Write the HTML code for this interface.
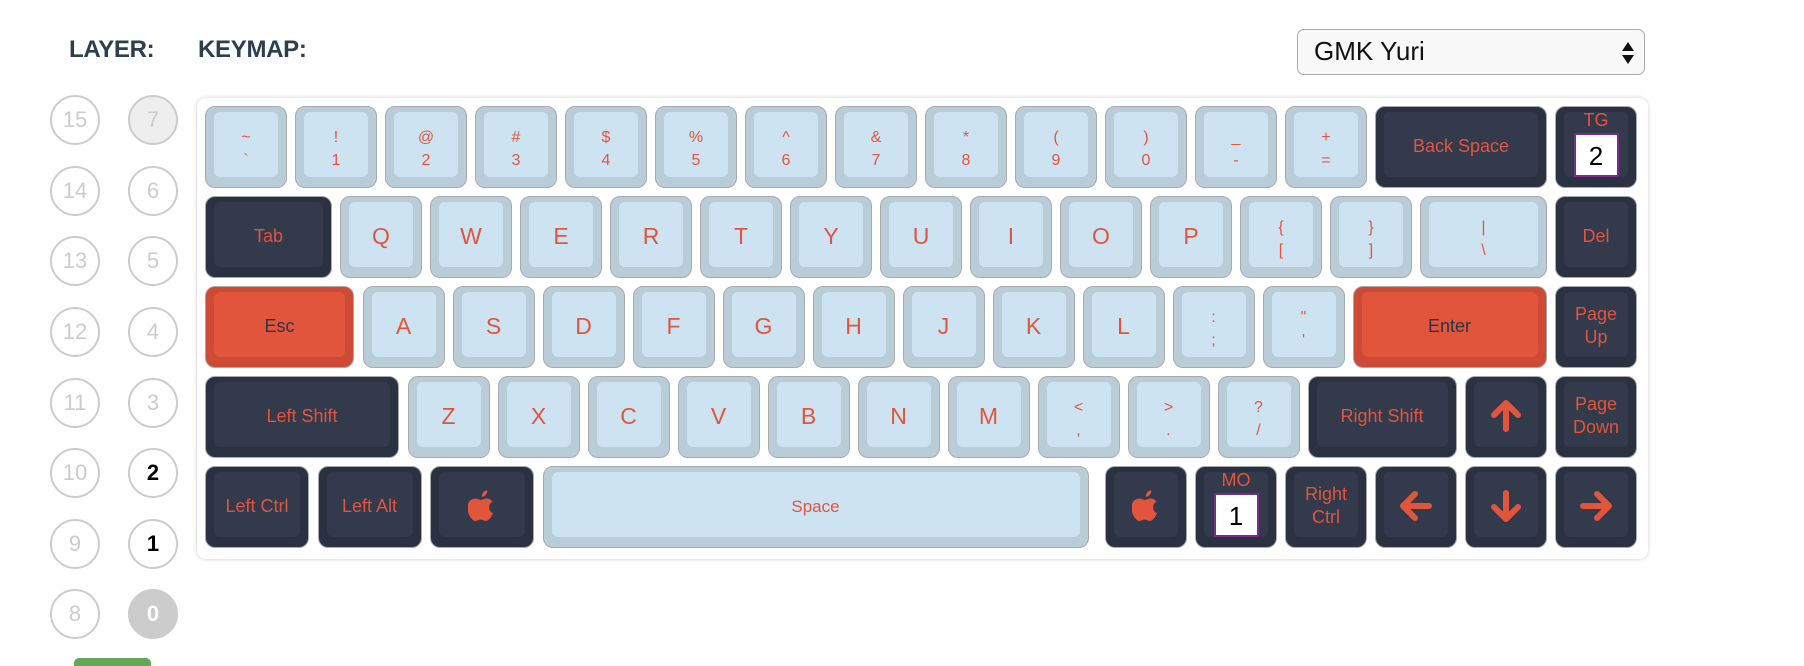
<!DOCTYPE html>
<html><head><meta charset="utf-8"><style>
html,body{margin:0;padding:0;width:1804px;height:666px;background:#fff;overflow:hidden;font-family:"Liberation Sans",sans-serif;position:relative}
.h{position:absolute;top:36px;font-size:24px;font-weight:bold;color:#2c3e50;letter-spacing:-0.3px}
.sel{position:absolute;left:1297px;top:29px;width:348px;height:46px;box-sizing:border-box;border:1.5px solid #aaa;border-radius:7px;background:#f8f8f8;font-size:26px;color:#111;line-height:43px;padding-left:16px}
.sel svg{position:absolute;right:10px;top:12px}
.c{position:absolute;width:50px;height:50px;box-sizing:border-box;border:2px solid #ccc;border-radius:50%;color:#ccc;font-size:22px;text-align:center;line-height:46px}
.panel{position:absolute;left:197px;top:98px;width:1451px;height:461px;background:#fff;border-radius:9px;box-shadow:0 0 4px rgba(0,0,0,.2)}
.k{position:absolute;height:82px;box-sizing:border-box;border:1.5px solid #aaa;border-radius:10px;background:#b9cdd9}
.k::before{content:"";position:absolute;left:8px;right:8px;top:5px;bottom:10px;background:#cee3f1;border-radius:6px}
.k.d{background:#2a3241}.k.d::before{background:#323a4b}
.k.r{background:#cd4b36}.k.r::before{background:#e2553d}
.k span{position:absolute;left:0;right:0;top:0;bottom:2px;display:flex;flex-direction:column;align-items:center;justify-content:center;color:#e2553d;font-size:16px;line-height:23px;text-align:center}
.k span.t{bottom:-4px}
.k span.a{font-size:23px}
.k span.m{font-size:18px}
.k.r span{color:#2c3545}
.box{width:45px;height:44px;background:#fff;border:2px solid #7b2a85;color:#000;font-size:26px;line-height:42px;box-sizing:border-box;margin-top:1px}
</style></head><body>
<div class="h" style="left:69px">LAYER:</div>
<div class="h" style="left:198px">KEYMAP:</div>
<div class="sel">GMK Yuri<svg width="12" height="22" viewBox="0 0 12 22"><path d="M6 0L12 9H0Z M6 22L12 13H0Z" fill="#111"/></svg></div>

<div class="c" style="left:50px;top:95px">15</div><div class="c" style="left:128px;top:95px;background:#eee">7</div>
<div class="c" style="left:50px;top:166px">14</div><div class="c" style="left:128px;top:166px">6</div>
<div class="c" style="left:50px;top:236px">13</div><div class="c" style="left:128px;top:236px">5</div>
<div class="c" style="left:50px;top:307px">12</div><div class="c" style="left:128px;top:307px">4</div>
<div class="c" style="left:50px;top:378px">11</div><div class="c" style="left:128px;top:378px">3</div>
<div class="c" style="left:50px;top:448px">10</div><div class="c" style="left:128px;top:448px;color:#000;font-weight:bold">2</div>
<div class="c" style="left:50px;top:519px">9</div><div class="c" style="left:128px;top:519px;color:#000;font-weight:bold">1</div>
<div class="c" style="left:50px;top:589px">8</div><div class="c" style="left:128px;top:589px;background:#ccc;color:#fff;font-weight:bold">0</div>
<div style="position:absolute;left:74px;top:658px;width:77px;height:20px;background:#62a857;border-radius:5px"></div>

<div class="panel"></div>
<!-- row1 -->
<div class="k" style="left:205px;top:106px;width:82px"><span class="t">~<br>`</span></div>
<div class="k" style="left:295px;top:106px;width:82px"><span class="t">!<br>1</span></div>
<div class="k" style="left:385px;top:106px;width:82px"><span class="t">@<br>2</span></div>
<div class="k" style="left:475px;top:106px;width:82px"><span class="t">#<br>3</span></div>
<div class="k" style="left:565px;top:106px;width:82px"><span class="t">$<br>4</span></div>
<div class="k" style="left:655px;top:106px;width:82px"><span class="t">%<br>5</span></div>
<div class="k" style="left:745px;top:106px;width:82px"><span class="t">^<br>6</span></div>
<div class="k" style="left:835px;top:106px;width:82px"><span class="t">&amp;<br>7</span></div>
<div class="k" style="left:925px;top:106px;width:82px"><span class="t">*<br>8</span></div>
<div class="k" style="left:1015px;top:106px;width:82px"><span class="t">(<br>9</span></div>
<div class="k" style="left:1105px;top:106px;width:82px"><span class="t">)<br>0</span></div>
<div class="k" style="left:1195px;top:106px;width:82px"><span class="t">_<br>-</span></div>
<div class="k" style="left:1285px;top:106px;width:82px"><span class="t">+<br>=</span></div>
<div class="k d" style="left:1375px;top:106px;width:172px"><span class="m">Back Space</span></div>
<div class="k d" style="left:1555px;top:106px;width:82px"><span class="m" style="justify-content:flex-start;padding-top:2px">TG<div class="box">2</div></span></div>
<!-- row2 -->
<div class="k d" style="left:205px;top:196px;width:127px"><span class="m">Tab</span></div>
<div class="k" style="left:340px;top:196px;width:82px"><span class="a">Q</span></div>
<div class="k" style="left:430px;top:196px;width:82px"><span class="a">W</span></div>
<div class="k" style="left:520px;top:196px;width:82px"><span class="a">E</span></div>
<div class="k" style="left:610px;top:196px;width:82px"><span class="a">R</span></div>
<div class="k" style="left:700px;top:196px;width:82px"><span class="a">T</span></div>
<div class="k" style="left:790px;top:196px;width:82px"><span class="a">Y</span></div>
<div class="k" style="left:880px;top:196px;width:82px"><span class="a">U</span></div>
<div class="k" style="left:970px;top:196px;width:82px"><span class="a">I</span></div>
<div class="k" style="left:1060px;top:196px;width:82px"><span class="a">O</span></div>
<div class="k" style="left:1150px;top:196px;width:82px"><span class="a">P</span></div>
<div class="k" style="left:1240px;top:196px;width:82px"><span class="t">{<br>[</span></div>
<div class="k" style="left:1330px;top:196px;width:82px"><span class="t">}<br>]</span></div>
<div class="k" style="left:1420px;top:196px;width:127px"><span class="t">|<br>\</span></div>
<div class="k d" style="left:1555px;top:196px;width:82px"><span class="m">Del</span></div>
<!-- row3 -->
<div class="k r" style="left:205px;top:286px;width:149px"><span class="m">Esc</span></div>
<div class="k" style="left:362.5px;top:286px;width:82px"><span class="a">A</span></div>
<div class="k" style="left:452.5px;top:286px;width:82px"><span class="a">S</span></div>
<div class="k" style="left:542.5px;top:286px;width:82px"><span class="a">D</span></div>
<div class="k" style="left:632.5px;top:286px;width:82px"><span class="a">F</span></div>
<div class="k" style="left:722.5px;top:286px;width:82px"><span class="a">G</span></div>
<div class="k" style="left:812.5px;top:286px;width:82px"><span class="a">H</span></div>
<div class="k" style="left:902.5px;top:286px;width:82px"><span class="a">J</span></div>
<div class="k" style="left:992.5px;top:286px;width:82px"><span class="a">K</span></div>
<div class="k" style="left:1082.5px;top:286px;width:82px"><span class="a">L</span></div>
<div class="k" style="left:1172.5px;top:286px;width:82px"><span class="t">:<br>;</span></div>
<div class="k" style="left:1262.5px;top:286px;width:82px"><span class="t">"<br>'</span></div>
<div class="k r" style="left:1352.5px;top:286px;width:194px"><span class="m">Enter</span></div>
<div class="k d" style="left:1555px;top:286px;width:82px"><span class="m">Page<br>Up</span></div>
<!-- row4 -->
<div class="k d" style="left:205px;top:376px;width:194px"><span class="m">Left Shift</span></div>
<div class="k" style="left:407.5px;top:376px;width:82px"><span class="a">Z</span></div>
<div class="k" style="left:497.5px;top:376px;width:82px"><span class="a">X</span></div>
<div class="k" style="left:587.5px;top:376px;width:82px"><span class="a">C</span></div>
<div class="k" style="left:677.5px;top:376px;width:82px"><span class="a">V</span></div>
<div class="k" style="left:767.5px;top:376px;width:82px"><span class="a">B</span></div>
<div class="k" style="left:857.5px;top:376px;width:82px"><span class="a">N</span></div>
<div class="k" style="left:947.5px;top:376px;width:82px"><span class="a">M</span></div>
<div class="k" style="left:1037.5px;top:376px;width:82px"><span class="t">&lt;<br>,</span></div>
<div class="k" style="left:1127.5px;top:376px;width:82px"><span class="t">&gt;<br>.</span></div>
<div class="k" style="left:1217.5px;top:376px;width:82px"><span class="t">?<br>/</span></div>
<div class="k d" style="left:1307.5px;top:376px;width:149px"><span class="m">Right Shift</span></div>
<div class="k d" style="left:1465px;top:376px;width:82px"><span><svg width="34" height="34" viewBox="0 0 34 34"><path d="M17 30V5M5 16L17 4L29 16" stroke="#e2553d" stroke-width="6" fill="none" stroke-linecap="round" stroke-linejoin="round"/></svg></span></div>
<div class="k d" style="left:1555px;top:376px;width:82px"><span class="m">Page<br>Down</span></div>
<!-- row5 -->
<div class="k d" style="left:205px;top:466px;width:104px"><span class="m">Left Ctrl</span></div>
<div class="k d" style="left:317.5px;top:466px;width:104px"><span class="m">Left Alt</span></div>
<div class="k d" style="left:430px;top:466px;width:104px"><span><svg width="28" height="34" viewBox="0 0 24 29"><path d="M16.5 1c.2 1.6-.4 3-1.3 4-.9 1-2.2 1.7-3.4 1.6-.2-1.5.5-3 1.3-3.9.9-1 2.3-1.7 3.4-1.7z M21.5 20.5c-.6 1.4-.9 2-1.7 3.2-1.1 1.6-2.6 3.6-4.5 3.6-1.7 0-2.100-1.1-4.4-1.1s-2.8 1.1-4.5 1.1c-1.9 0-3.3-1.8-4.4-3.4C-.9 19.5-1.2 14.2.7 11.3 2 9.3 4.1 8.1 6.1 8.1c2 0 3.3 1.1 5 1.1s2.7-1.1 5-1.1c1.8 0 3.7 1 5 2.7-4.4 2.4-3.7 8.8.4 9.7z" fill="#e2553d"/></svg></span></div>
<div class="k" style="left:542.5px;top:466px;width:546px"><span class="m" style="font-size:17px">Space</span></div>
<div class="k d" style="left:1105px;top:466px;width:82px"><span><svg width="28" height="34" viewBox="0 0 24 29"><path d="M16.5 1c.2 1.6-.4 3-1.3 4-.9 1-2.2 1.7-3.4 1.6-.2-1.5.5-3 1.3-3.9.9-1 2.3-1.7 3.4-1.7z M21.5 20.5c-.6 1.4-.9 2-1.700 3.2-1.1 1.6-2.6 3.6-4.5 3.6-1.7 0-2.1-1.1-4.4-1.1s-2.8 1.1-4.5 1.1c-1.9 0-3.3-1.8-4.4-3.4C-.9 19.5-1.2 14.2.7 11.3 2 9.3 4.1 8.1 6.1 8.1c2 0 3.3 1.1 5 1.1s2.7-1.1 5-1.1c1.8 0 3.7 1 5 2.7-4.4 2.4-3.7 8.8.4 9.7z" fill="#e2553d"/></svg></span></div>
<div class="k d" style="left:1195px;top:466px;width:82px"><span class="m" style="justify-content:flex-start;padding-top:2px">MO<div class="box">1</div></span></div>
<div class="k d" style="left:1285px;top:466px;width:82px"><span class="m">Right<br>Ctrl</span></div>
<div class="k d" style="left:1375px;top:466px;width:82px"><span><svg width="34" height="34" viewBox="0 0 34 34"><path d="M30 17H5M16 5L4 17L16 29" stroke="#e2553d" stroke-width="6" fill="none" stroke-linecap="round" stroke-linejoin="round"/></svg></span></div>
<div class="k d" style="left:1465px;top:466px;width:82px"><span><svg width="34" height="34" viewBox="0 0 34 34"><path d="M17 4V29M5 18L17 30L29 18" stroke="#e2553d" stroke-width="6" fill="none" stroke-linecap="round" stroke-linejoin="round"/></svg></span></div>
<div class="k d" style="left:1555px;top:466px;width:82px"><span><svg width="34" height="34" viewBox="0 0 34 34"><path d="M4 17H29M18 5L30 17L18 29" stroke="#e2553d" stroke-width="6" fill="none" stroke-linecap="round" stroke-linejoin="round"/></svg></span></div>
</body></html>
